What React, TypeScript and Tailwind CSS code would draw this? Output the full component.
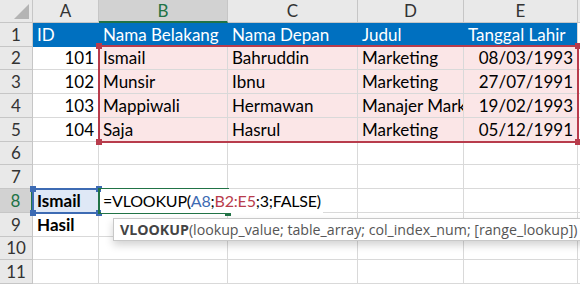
const cols = [
  { key: "A", w: 66 },
  { key: "B", w: 129 },
  { key: "C", w: 130 },
  { key: "D", w: 106 },
  { key: "E", w: 114 },
]

const heights = [24, 23, 24, 24, 24, 23, 24, 24, 24, 23, 24]

type Cell = { text?: React.ReactNode; right?: boolean; bold?: boolean }

const people = [
  ["101", "Ismail", "Bahruddin", "Marketing", "08/03/1993"],
  ["102", "Munsir", "Ibnu", "Marketing", "27/07/1991"],
  ["103", "Mappiwali", "Hermawan", "Manajer Marketing", "19/02/1993"],
  ["104", "Saja", "Hasrul", "Marketing", "05/12/1991"],
]

function rowCells(r: number): Cell[] {
  if (r === 1) return ["ID", "Nama Belakang", "Nama Depan", "Judul", "Tanggal Lahir"].map((t) => ({ text: t }))
  if (r >= 2 && r <= 5) {
    const p = people[r - 2]
    return [
      { text: p[0], right: true },
      { text: p[1] },
      { text: p[2] },
      { text: p[3] },
      { text: p[4], right: true },
    ]
  }
  if (r === 8) return [{ text: "Ismail", bold: true }, {}, {}, {}, {}]
  if (r === 9) return [{ text: "Hasil", bold: true }, {}, {}, {}, {}]
  return [{}, {}, {}, {}, {}]
}

function Handle({ className }: { className: string }) {
  return <div className={`absolute h-[6px] w-[6px] ${className}`} />
}

export default function App() {
  return (
    <div className="relative h-[287px] w-[580px] overflow-hidden bg-white text-black" style={{ fontFamily: "Lato, 'Open Sans', sans-serif" }}>
      {/* column headers */}
      <div className="flex h-[23px]">
        <div className="relative w-[33px] shrink-0 border-r border-b border-[#c6c6c6] bg-[#e9e9e9]">
          <svg className="absolute right-[3px] bottom-[3px]" width="15" height="15" viewBox="0 0 15 15">
            <polygon points="15,0 15,15 0,15" fill="#b4b4b4" />
          </svg>
        </div>
        {cols.map((c) => (
          <div
            key={c.key}
            style={{ width: c.w }}
            className={`flex shrink-0 items-center justify-center border-r text-[17px] ${
              c.key === "B"
                ? "border-b-2 border-r-[#c6c6c6] border-b-[#217346] bg-[#d2d2d2] text-[#217346]"
                : "border-b border-[#c6c6c6] bg-[#e9e9e9] text-[#333]"
            }`}
          >
            {c.key}
          </div>
        ))}
        <div className="flex-1 border-b border-[#c6c6c6] bg-[#e9e9e9]" />
      </div>

      {heights.map((h, i) => {
        const r = i + 1
        const cells = rowCells(r)
        return (
          <div key={r} className="flex" style={{ height: h }}>
            <div
              className={`flex w-[33px] shrink-0 items-center justify-center border-b border-[#c6c6c6] text-[17px] ${
                r === 8 ? "border-r-2 border-r-[#217346] bg-[#d2d2d2] text-[#217346]" : "border-r border-r-[#c6c6c6] bg-[#e9e9e9] text-[#333]"
              }`}
            >
              {r}
            </div>
            {cols.map((c, ci) => {
              const cell = cells[ci]
              let bg = "bg-white"
              let border = "border-r border-b border-[#d9d9d9]"
              if (r === 1) {
                bg = "bg-[#0070c0] text-white"
                border = ci === 4 ? "border-r border-[#d9d9d9]" : ""
              } else if (r >= 2 && r <= 5 && ci >= 1) bg = "bg-[#fbe6e7]"
              else if (r === 8 && ci === 0) bg = "bg-[#dfe8f6]"
              return (
                <div
                  key={c.key}
                  style={{ width: c.w }}
                  className={`flex shrink-0 items-center overflow-hidden whitespace-nowrap px-[4px] text-[17px] ${bg} ${border} ${
                    cell.right ? "justify-end" : ""
                  } ${cell.bold ? "font-bold" : ""}`}
                >
                  {cell.text}
                </div>
              )
            })}
            <div className="flex-1 border-b border-[#d9d9d9]" />
          </div>
        )
      })}

      {/* red range B2:E5 */}
      <div className="absolute top-[45px] left-[98px] h-[98px] w-[481px] border-2 border-[#b83c4c]">
        <Handle className="-top-[4px] -left-[4px] bg-[#b83c4c]" />
        <Handle className="-bottom-[4px] -left-[4px] bg-[#b83c4c]" />
        <Handle className="-top-[4px] -right-[4px] bg-[#b83c4c]" />
        <Handle className="-bottom-[4px] -right-[4px] bg-[#b83c4c]" />
      </div>

      {/* blue A8 reference */}
      <div className="absolute top-[188px] left-[32px] h-[26px] w-[68px] border-2 border-[#3d6bb3]">
        <Handle className="-top-[4px] -left-[4px] bg-[#3d6bb3]" />
        <Handle className="-bottom-[4px] -left-[4px] bg-[#3d6bb3]" />
        <Handle className="-top-[4px] -right-[4px] bg-[#3d6bb3]" />
        <Handle className="-bottom-[4px] -right-[4px] bg-[#3d6bb3]" />
      </div>

      {/* active cell B8 */}
      <div className="absolute top-[188px] left-[98px] h-[26px] w-[131px] border-2 border-[#217346]">
        <Handle className="-bottom-[4px] -right-[4px] bg-[#217346]" />
      </div>
      <div className="absolute top-[189px] left-[101px] flex h-[24px] items-center bg-white pr-[2px] text-[16px] tracking-[-0.2px] whitespace-nowrap">
        <span className="pl-[2px]">=VLOOKUP(</span>
        <span className="text-[#3d6bb3]">A8</span>
        <span>;</span>
        <span className="text-[#b83c4c]">B2:E5</span>
        <span>;3;FALSE)</span>
      </div>

      {/* function tooltip */}
      <div
        className="absolute top-[218px] left-[113px] flex h-[23px] w-[480px] items-center border border-[#c8c8c8] bg-white pl-[6px] text-[14.2px] text-[#555] shadow-[0_4px_8px_rgba(0,0,0,0.18)]"
        style={{ fontFamily: "'Open Sans', 'Noto Sans', sans-serif" }}
      >
        <span className="font-bold text-[#444]">VLOOKUP</span>
        <span>(lookup_value; table_array; col_index_num; [range_lookup])</span>
      </div>
    </div>
  )
}
